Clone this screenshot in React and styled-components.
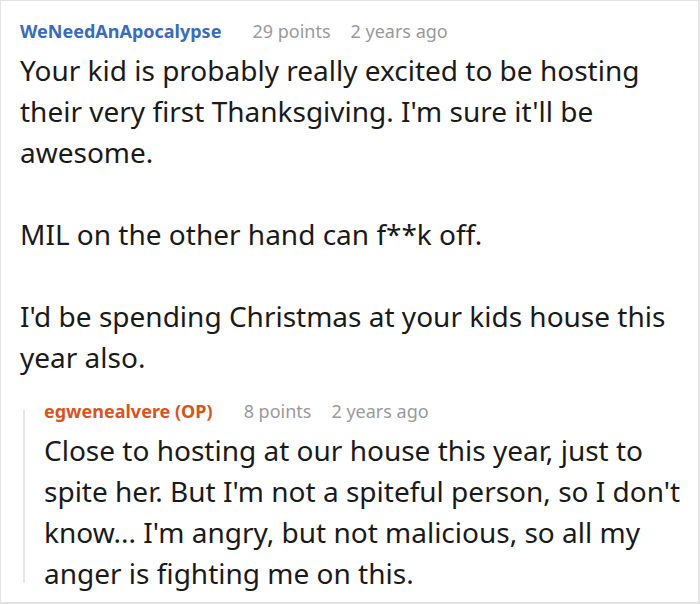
import React from "react";
import styled, { createGlobalStyle } from "styled-components";

const Global = createGlobalStyle`
  html, body { margin: 0; padding: 0; background: #fff; }
  body { font-family: "Noto Sans", "Open Sans", sans-serif; }
`;

const Card = styled.div`
  box-sizing: border-box;
  width: 700px;
  height: 604px;
  border: 1px solid #e3e3e3;
  border-width: 1px 2px 2px 1px;
  padding: 18px 10px 0 19px;
  overflow: hidden;
`;

const Meta = styled.div`
  display: flex;
  align-items: baseline;
  font-size: 18px;
  line-height: 24px;
  white-space: nowrap;
`;

const Author = styled.span`
  font-weight: 700;
  color: ${(p) => (p.$op ? "#d9541e" : "#3b6bbd")};
  margin-right: 31px;
`;

const Info = styled.span`
  color: #9a9a9a;
  margin-right: 20px;
`;

const Body = styled.div`
  margin-top: 7px;
  font-size: 28px;
  line-height: 41px;
  color: #1a1a1a;
`;

const Para = styled.p`
  margin: 0 0 41px;
  &:last-child { margin-bottom: 0; }
`;

const Reply = styled.div`
  position: relative;
  margin-top: 21px;
  margin-left: 3px;
  padding-left: 21px;
  &::before {
    content: "";
    position: absolute;
    left: 0;
    top: 11px;
    bottom: 11px;
    width: 2px;
    background: #e6e6e6;
  }
`;

export default function App() {
  return (
    <>
      <Global />
      <Card>
        <Meta>
          <Author>WeNeedAnApocalypse</Author>
          <Info>29 points</Info>
          <Info>2 years ago</Info>
        </Meta>
        <Body>
          <Para>
            Your kid is probably really excited to be hosting their very first
            Thanksgiving. I'm sure it'll be awesome.
          </Para>
          <Para>MIL on the other hand can f**k off.</Para>
          <Para>I'd be spending Christmas at your kids house this year also.</Para>
        </Body>
        <Reply>
          <Meta>
            <Author $op>egwenealvere (OP)</Author>
            <Info>8 points</Info>
            <Info>2 years ago</Info>
          </Meta>
          <Body>
            <Para>
              Close to hosting at our house this year, just to spite her. But
              I'm not a spiteful person, so I don't know... I'm angry, but not
              malicious, so all my anger is fighting me on this.
            </Para>
          </Body>
        </Reply>
      </Card>
    </>
  );
}
